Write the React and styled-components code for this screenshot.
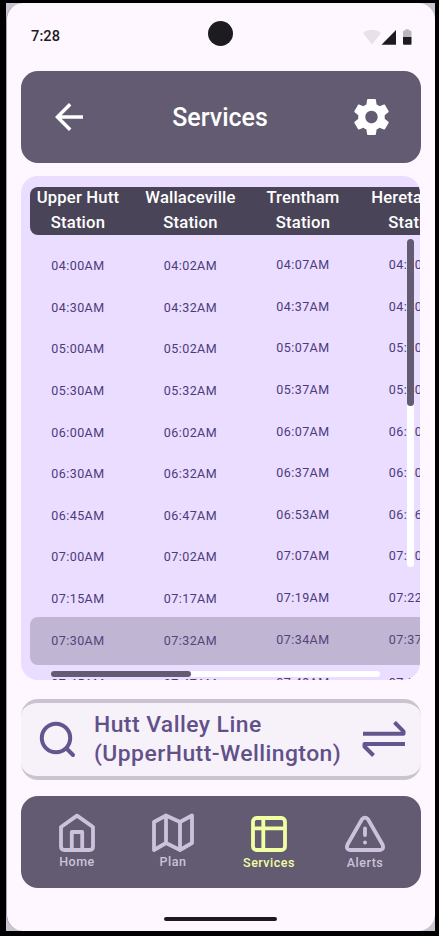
import React from "react";
import styled, { createGlobalStyle, css } from "styled-components";

const GlobalStyle = createGlobalStyle`
  *, *::before, *::after { box-sizing: border-box; }
  body { margin: 0; background: #000; font-family: Roboto, sans-serif; overflow: hidden; }
  button { font: inherit; border: 0; background: none; padding: 0; color: inherit; }
  svg { display: block; flex: none; }
`;

const Screen = styled.main`
  width: 439px;
  height: 936px;
  padding: 3px 4px 5px 6px;
  background: #000;
`;

const Device = styled.div`
  height: 928px;
  background: #cac4d0;
`;

const Page = styled.div`
  height: 928px;
  padding: 0 14px;
  border-left: 1px solid #aaa5ac;
  border-radius: 17px;
  background: #fef7ff;
  display: flex;
  flex-direction: column;
`;

const StatusBar = styled.div`
  height: 68px;
  padding: 18px 9.5px 0 10px;
  display: grid;
  grid-template-columns: 1fr 25px 1fr;
  align-items: start;
`;

const Clock = styled.time`
  margin-top: 6px;
  font-size: 14.6px;
  line-height: 18px;
  font-weight: 500;
  letter-spacing: 0.1px;
  color: #1d1b20;
`;

const Camera = styled.div`
  width: 25px;
  height: 25px;
  margin-left: -0.5px;
  border-radius: 50%;
  background: #1d1b20;
`;

const StatusIcons = styled.svg`
  justify-self: end;
  margin-top: 8px;
`;

const TopBar = styled.header`
  height: 92px;
  flex: none;
  padding: 0 32px 0 34px;
  border-radius: 17px;
  background: #625b71;
  color: #fff;
  display: flex;
  align-items: center;
  justify-content: space-between;
`;

const Title = styled.h1`
  margin: 1px 0 0 3px;
  font-size: 25px;
  line-height: 30px;
  font-weight: 500;
  color: #fff;
`;

const TimetableCard = styled.section`
  width: 399px;
  height: 504px;
  flex: none;
  margin-top: 13px;
  padding: 11px 0 0 0.7px;
  position: relative;
  overflow: hidden;
  border-radius: 17px;
  background: #eaddff;
`;

const Columns = css`
  display: grid;
  grid-template-columns: repeat(4, 112.5px);
  text-align: center;
`;

const HeadRow = styled.div`
  ${Columns}
  height: 48px;
  margin-left: 8px;
  width: 450px;
  border-radius: 8px;
  background: #4a4458;
  color: #fff;
`;

const Station = styled.div`
  margin: -1.6px 0 0 -16px;
  font-size: 16.67px;
  line-height: 25px;
  font-weight: 500;
  letter-spacing: 0.16px;
`;

const Body = styled.div`
  padding-top: 10.2px;
`;

const TimeRow = styled.div`
  ${Columns}
  position: relative;
  width: 450px;
  height: 41.62px;
  ${({ $current }) =>
    $current &&
    css`
      margin-bottom: 1.8px;
      &::after {
        content: "";
        position: absolute;
        inset: -2.6px -10px -3.4px 8px;
        border-radius: 8px;
        background: rgba(98, 91, 113, 0.3);
      }
    `}
`;

const Time = styled.span`
  font-size: 12.5px;
  line-height: 41.6px;
  letter-spacing: 0.42px;
  color: #4c3a7c;
  &:nth-child(n + 3) {
    margin-top: -1px;
  }
`;

const Track = styled.div`
  position: absolute;
  border-radius: 4px;
  background: #fff;
  ${({ $vertical }) =>
    $vertical
      ? "left: 386px; top: 63px; width: 7px; height: 328px;"
      : "left: 30px; top: 495px; width: 329px; height: 6px;"}
`;

const Thumb = styled.div`
  border-radius: 4px;
  background: #625b71;
  ${({ $vertical }) =>
    $vertical ? "width: 7px; height: 167px;" : "width: 140px; height: 6px;"}
`;

const LinePicker = styled.section`
  height: 81px;
  flex: none;
  margin-top: 19px;
  padding: 0 15px 0 18px;
  border: solid #cac4d0;
  border-width: 4px 0;
  border-radius: 17px;
  background: #f7f2fa;
  display: flex;
  align-items: center;
`;

const LineName = styled.p`
  flex: 1;
  margin: -1px 0 0 18px;
  white-space: nowrap;
  font-size: 22.9px;
  line-height: 29.2px;
  font-weight: 500;
  letter-spacing: 0.45px;
  color: #625189;
`;

const NavBar = styled.nav`
  height: 92px;
  flex: none;
  margin-top: 16px;
  padding: 0 8px;
  border-radius: 17px;
  background: #625b71;
  display: grid;
  grid-template-columns: repeat(4, 96px);
`;

const NavItem = styled.button`
  padding-top: ${({ $active, $low }) => ($active || $low ? 18 : 17)}px;
  display: flex;
  flex-direction: column;
  align-items: center;
  gap: 1px;
  font-size: 12.5px;
  line-height: 16px;
  font-weight: 500;
  letter-spacing: 0.5px;
  color: ${({ $active }) => ($active ? "#f1ffa3" : "#ccc2dc")};
`;

const HomeIndicator = styled.div`
  width: 113px;
  height: 4px;
  flex: none;
  align-self: center;
  margin: 29px 1px 0 0;
  border-radius: 2px;
  background: #1d1b20;
`;

const stations = ["Upper Hutt", "Wallaceville", "Trentham", "Heretaunga"];

const departures = [
  ["04:00AM", "04:02AM", "04:07AM", "04:10AM"],
  ["04:30AM", "04:32AM", "04:37AM", "04:40AM"],
  ["05:00AM", "05:02AM", "05:07AM", "05:10AM"],
  ["05:30AM", "05:32AM", "05:37AM", "05:40AM"],
  ["06:00AM", "06:02AM", "06:07AM", "06:10AM"],
  ["06:30AM", "06:32AM", "06:37AM", "06:40AM"],
  ["06:45AM", "06:47AM", "06:53AM", "06:56AM"],
  ["07:00AM", "07:02AM", "07:07AM", "07:10AM"],
  ["07:15AM", "07:17AM", "07:19AM", "07:22AM"],
  ["07:30AM", "07:32AM", "07:34AM", "07:37AM"],
  ["07:45AM", "07:47AM", "07:49AM", "07:52AM"],
];
const currentRow = 9;

const BackIcon = () => (
  <svg width="28" height="28" viewBox="0 0 28 28" fill="none" stroke="#fff" strokeWidth="3.5">
    <path d="M28 14H3M15.2 1.2L2.4 14L15.2 26.8" />
  </svg>
);

const GearIcon = () => (
  <svg width="35" height="36" viewBox="2.1 2 19.8 20" preserveAspectRatio="none" fill="#fff">
    <path d="M19.43 12.98c.04-.32.07-.64.07-.98s-.03-.66-.07-.98l2.11-1.65c.19-.15.24-.42.12-.64l-2-3.46c-.12-.22-.39-.3-.61-.22l-2.49 1c-.52-.4-1.08-.73-1.69-.98l-.38-2.65C14.46 2.18 14.25 2 14 2h-4c-.25 0-.46.18-.49.42l-.38 2.65c-.61.25-1.17.59-1.69.98l-2.49-1c-.23-.09-.49 0-.61.22l-2 3.46c-.13.22-.07.49.12.64l2.11 1.65c-.04.32-.07.65-.07.98s.03.66.07.98l-2.11 1.65c-.19.15-.24.42-.12.64l2 3.46c.12.22.39.3.61.22l2.49-1c.52.4 1.08.73 1.69.98l.38 2.65c.03.24.24.42.49.42h4c.25 0 .46-.18.49-.42l.38-2.65c.61-.25 1.17-.59 1.69-.98l2.49 1c.23.09.49 0 .61-.22l2-3.46c.12-.22.07-.49-.12-.64l-2.11-1.65zM12 15.5c-1.93 0-3.5-1.57-3.5-3.5s1.57-3.5 3.5-3.5 3.5 1.57 3.5 3.5-1.57 3.5-3.5 3.5z" />
  </svg>
);

const SearchIcon = () => (
  <svg width="37" height="37" viewBox="0 0 37 37" fill="none" stroke="#65558f" strokeWidth="4" strokeLinecap="round">
    <circle cx="17" cy="17" r="14.2" />
    <path d="M27.5 27.5L34 34" />
  </svg>
);

const SwapIcon = () => (
  <svg width="44" height="38" viewBox="0 0 44 38" fill="none" stroke="#65558f" strokeWidth="4" strokeLinejoin="round">
    <path d="M1 12.8H41.5V10.3L32.5 1.3M43 23H2.5V25.5L11.5 34.5" />
  </svg>
);

const HomeIcon = () => (
  <svg width="36" height="40" viewBox="0 0 36 40" fill="none" stroke="currentColor" strokeWidth="3.8" strokeLinejoin="round">
    <path d="M2 14L18 2.6L34 14V33.5Q34 37 30.5 37H5.5Q2 37 2 33.5ZM12.8 37V19H23.2V37" />
  </svg>
);

const MapIcon = () => (
  <svg width="42" height="40" viewBox="0 0 42 40" fill="none" stroke="currentColor" strokeWidth="3.8" strokeLinejoin="round">
    <path d="M2 9L14 2.5L28 9L40 2.5V30L28 37L14 30L2 37ZM14 2.5V30M28 9V37" />
  </svg>
);

const TableIcon = () => (
  <svg width="36" height="40" viewBox="0 0 36 40" fill="none" stroke="currentColor" strokeWidth="3.8">
    <rect x="2" y="4" width="32" height="32" rx="3.5" />
    <path d="M2 14.3H34M12.3 4V36" />
  </svg>
);

const AlertIcon = () => (
  <svg width="40" height="40" viewBox="0 0 40 40" fill="none" stroke="currentColor" strokeWidth="3.8" strokeLinejoin="round" strokeLinecap="round">
    <path d="M17 5.3L2.5 30.5Q0.6 35.7 5 36H35Q39.4 35.7 37.5 30.5L23 5.3Q20 1.8 17 5.3ZM20 14.5V21" />
    <path d="M20 28.4V28.5" />
  </svg>
);

const SystemIcons = () => (
  <StatusIcons width="49" height="16" viewBox="0 0 49 16">
    <path d="M0 4C4.8-.2 13.2-.2 18 4L9 15.5Z" fill="#e8e1e9" />
    <path d="M18.5 15.8L33 1V15.8Z" fill="#1d1b20" />
    <path d="M40 8V3Q40 1.6 41.3 1.6H42.4V.3H45.8V1.6H47.2Q48.5 1.6 48.5 3V8Z" fill="#bab5bc" />
    <path d="M40 8H48.5V14.8Q48.5 15.8 47.5 15.8H41Q40 15.8 40 14.8Z" fill="#1d1b20" />
  </StatusIcons>
);

const navItems = [
  { label: "Home", Icon: HomeIcon },
  { label: "Plan", Icon: MapIcon },
  { label: "Services", Icon: TableIcon, active: true },
  { label: "Alerts", Icon: AlertIcon, low: true },
];

export default function App() {
  return (
    <Screen>
      <GlobalStyle />
      <Device>
        <Page>
          <StatusBar>
            <Clock>7:28</Clock>
            <Camera />
            <SystemIcons />
          </StatusBar>
          <TopBar>
            <button aria-label="Back"><BackIcon /></button>
            <Title>Services</Title>
            <button aria-label="Settings"><GearIcon /></button>
          </TopBar>
          <TimetableCard>
            <HeadRow>
              {stations.map((name) => (
                <Station key={name}>{name}<br />Station</Station>
              ))}
            </HeadRow>
            <Body>
              {departures.map((row, i) => (
                <TimeRow key={row[0]} $current={i === currentRow}>
                  {row.map((time) => <Time key={time}>{time}</Time>)}
                </TimeRow>
              ))}
            </Body>
            <Track $vertical><Thumb $vertical /></Track>
            <Track><Thumb /></Track>
          </TimetableCard>
          <LinePicker>
            <SearchIcon />
            <LineName>Hutt Valley Line<br />(UpperHutt-Wellington)</LineName>
            <SwapIcon />
          </LinePicker>
          <NavBar>
            {navItems.map(({ label, Icon, active, low }) => (
              <NavItem key={label} $active={active} $low={low}>
                <Icon />
                {label}
              </NavItem>
            ))}
          </NavBar>
          <HomeIndicator />
        </Page>
      </Device>
    </Screen>
  );
}
